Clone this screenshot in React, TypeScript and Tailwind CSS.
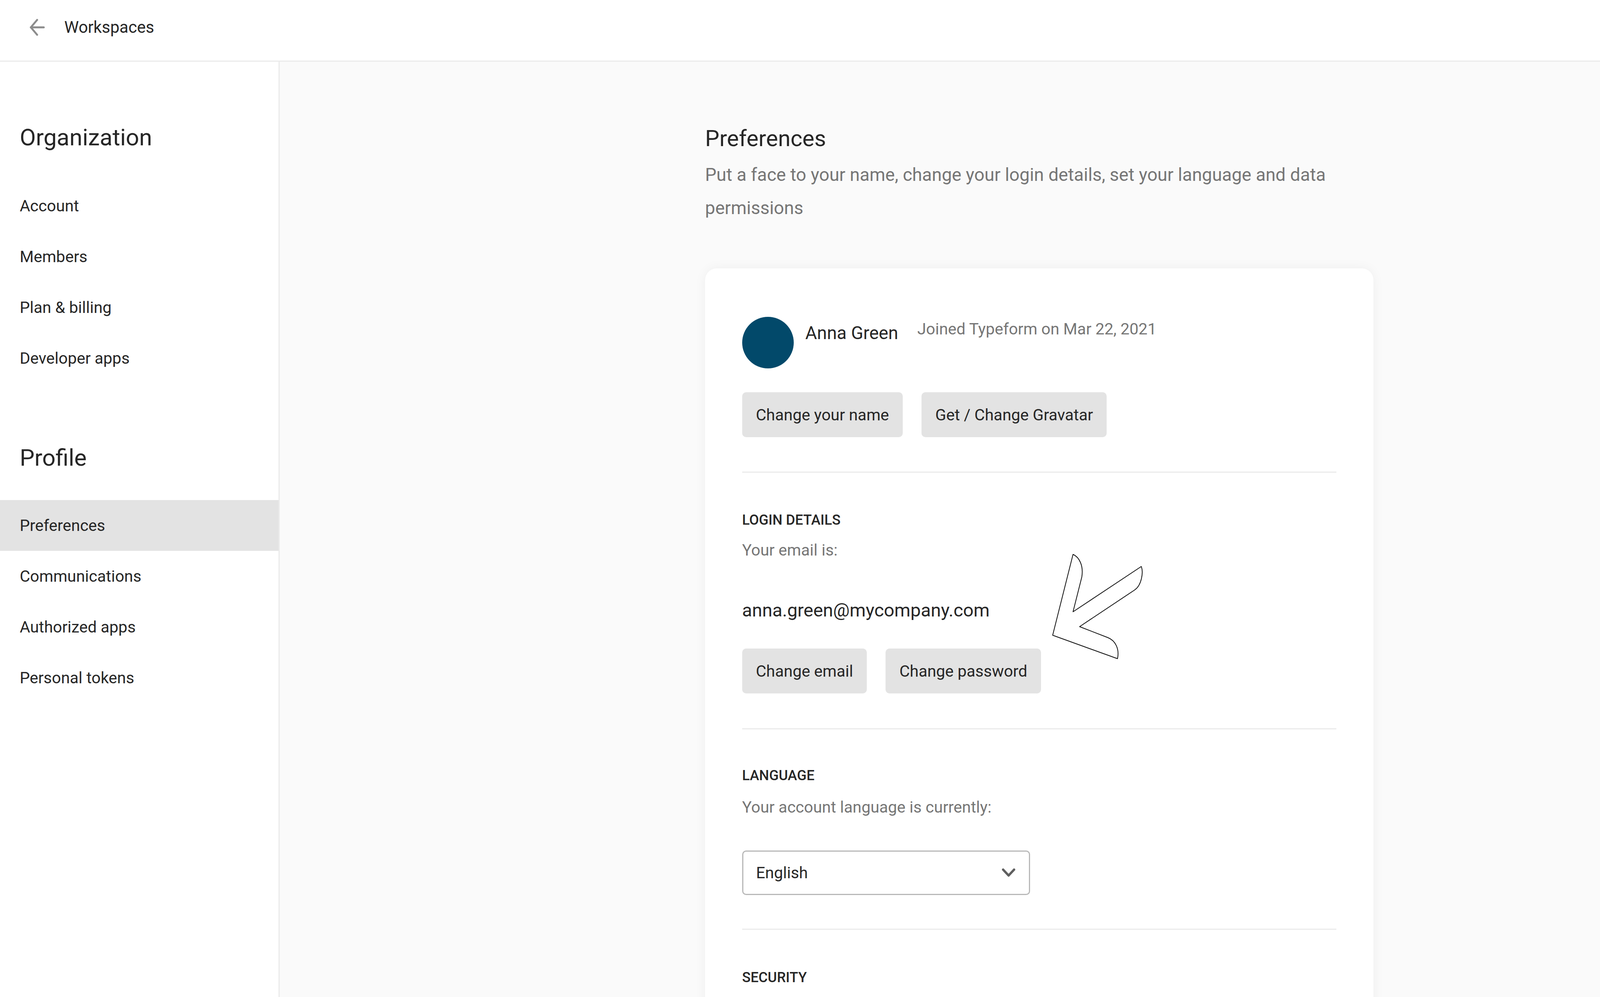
import React from 'react';

const orgItems = ['Account', 'Members', 'Plan & billing', 'Developer apps'];
const profileItems = ['Preferences', 'Communications', 'Authorized apps', 'Personal tokens'];

function SideItem({ label, active }: { label: string; active?: boolean }) {
  return (
    <div
      className={`flex h-[130px] items-center pl-[1.23vw] text-[41px] leading-[56px] text-[#262626] ${
        active ? 'bg-[#e3e3e3]' : ''
      }`}
    >
      {label}
    </div>
  );
}

function GrayButton({ children }: { children: React.ReactNode }) {
  return (
    <button className="flex h-[115px] items-center rounded-[10px] bg-[#e3e3e3] px-[0.86vw] text-[41px] leading-[56px] text-[#262626]">
      {children}
    </button>
  );
}

function SectionTitle({ children }: { children: React.ReactNode }) {
  return (
    <h3 className="text-[36px] font-medium uppercase leading-[60px] text-[#262626]">{children}</h3>
  );
}

export default function App() {
  return (
    <div className="h-[2552px] w-full overflow-hidden bg-[#fafafa] font-['Roboto','Liberation_Sans',sans-serif]">
      {/* Top bar */}
      <header className="flex h-[158px] items-center border-b-[3px] border-[#ebebeb] bg-white pb-[16px] pl-[1.84vw]">
        <svg width="40" height="44" viewBox="0 0 40 44" fill="none" stroke="#8c8c8c" strokeWidth="5" strokeLinecap="round" strokeLinejoin="round">
          <path d="M37 22H4" />
          <path d="M20 3L4 22l16 19" />
        </svg>
        <span className="ml-[1.2vw] text-[42px] leading-[60px] text-[#262626]">Workspaces</span>
      </header>

      <div className="flex h-[2394px]">
        {/* Sidebar */}
        <aside className="w-[17.48vw] shrink-0 border-r-[3px] border-[#ebebeb] bg-white pt-[144px]">
          <h2 className="pl-[1.23vw] text-[60px] leading-[100px] text-[#262626]">Organization</h2>
          <nav className="mt-[60px]">
            {orgItems.map((item) => (
              <SideItem key={item} label={item} />
            ))}
          </nav>
          <h2 className="mt-[140px] pl-[1.23vw] text-[60px] leading-[100px] text-[#262626]">Profile</h2>
          <nav className="mt-[58px]">
            {profileItems.map((item) => (
              <SideItem key={item} label={item} active={item === 'Preferences'} />
            ))}
          </nav>
        </aside>

        {/* Main */}
        <main className="min-w-0 flex-1 pl-[26.59vw] pt-[148px]">
          <div className="w-[41.76vw]">
            <h1 className="text-[58px] leading-[96px] text-[#262626]">Preferences</h1>
            <p className="mt-[3px] text-[46px] leading-[85px] text-[#767676]">
              Put a face to your name, change your login details, set your language and data permissions
            </p>

            <div className="relative mt-[112px] rounded-[30px] bg-white px-[2.31vw] pt-[118px] shadow-[0_0_30px_rgba(0,0,0,0.05)]">
              {/* Profile */}
              <section className="pb-[88px]">
                <div className="flex h-[144px] items-start">
                  <div className="w-[3.95vw] shrink-0 pt-[6px]">
                    <div className="h-[132px] w-[132px] rounded-full bg-[#02496a]" />
                  </div>
                  <span className="mt-[15px] text-[46px] leading-[64px] text-[#262626]">Anna Green</span>
                  <span className="ml-[1.19vw] mt-[8px] text-[41px] leading-[58px] text-[#767676]">
                    Joined Typeform on Mar 22, 2021
                  </span>
                </div>
                <div className="mt-[55px] flex gap-[1.17vw]">
                  <GrayButton>Change your name</GrayButton>
                  <GrayButton>Get / Change Gravatar</GrayButton>
                </div>
              </section>

              {/* Login details */}
              <section className="border-t-[3px] border-[#ebebeb] pb-[90px] pt-[91px]">
                <SectionTitle>Login details</SectionTitle>
                <p className="mt-[11px] text-[41px] leading-[72px] text-[#767676]">Your email is:</p>
                <p className="mt-[78px] text-[47px] leading-[80px] text-[#262626]">anna.green@mycompany.com</p>
                <div className="mt-[58px] flex h-[114px] gap-[1.17vw]">
                  <GrayButton>Change email</GrayButton>
                  <GrayButton>Change password</GrayButton>
                </div>
              </section>

              {/* Language */}
              <section className="border-t-[3px] border-[#ebebeb] pb-[86px] pt-[88px]">
                <SectionTitle>Language</SectionTitle>
                <p className="mt-[15px] text-[41px] leading-[72px] text-[#767676]">
                  Your account language is currently:
                </p>
                <div className="mt-[75px] flex h-[114px] w-[17.99vw] items-center justify-between rounded-[10px] border-[3px] border-[#b8b8b8] bg-white pl-[0.8vw] pr-[0.82vw]">
                  <span className="text-[41px] leading-[56px] text-[#262626]">English</span>
                  <svg width="36" height="24" viewBox="0 0 36 24" fill="none" stroke="#5f5f5f" strokeWidth="6" strokeLinecap="round" strokeLinejoin="round">
                    <path d="M4 4l14 15L32 4" />
                  </svg>
                </div>
              </section>

              {/* Security */}
              <section className="border-t-[3px] border-[#ebebeb] pb-[200px] pt-[92px]">
                <SectionTitle>Security</SectionTitle>
              </section>

              {/* Hand-drawn arrow annotation */}
              <svg
                className="pointer-events-none absolute left-[51.05%] top-[713px] h-[310px] w-[6.46vw]"
                viewBox="3340 1400 330 310"
                preserveAspectRatio="none"
                fill="white"
                stroke="#111111"
                strokeWidth="2"
                strokeLinejoin="round"
              >
                <path
                  vectorEffect="non-scaling-stroke"
                  d="M3426 1419 C3446 1426 3460 1448 3454 1477 L3426 1566 L3644 1450 C3651 1465 3645 1498 3623 1510 L3447 1604 L3537 1632 C3560 1639 3575 1660 3568 1686 L3361 1626 Z"
                />
              </svg>
            </div>
          </div>
        </main>
      </div>
    </div>
  );
}
